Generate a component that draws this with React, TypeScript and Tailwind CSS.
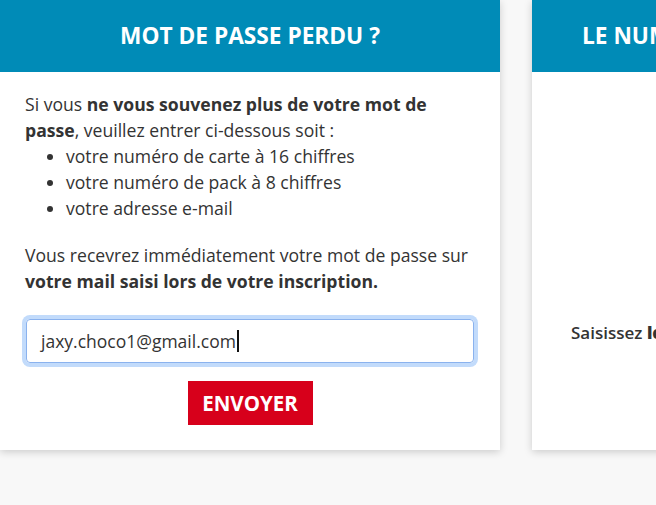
import React from 'react';

const FONT = { fontFamily: '"Open Sans", "Liberation Sans", sans-serif' };

function CardHeader({ title }: { title: string }) {
  return (
    <div className="h-[72px] bg-[#008bb7] flex items-center justify-center shrink-0">
      <h2 className="text-white font-bold text-[22.7px] whitespace-nowrap">{title}</h2>
    </div>
  );
}

export default function App() {
  return (
    <div
      className="w-[656px] h-[505px] overflow-hidden bg-[#f8f8f8] text-[#333]"
      style={FONT}
    >
      <div className="flex gap-[32px] w-max">
        <div className="w-[500px] h-[450px] bg-white shadow-[0_2px_8px_rgba(0,0,0,0.18)] flex flex-col">
          <CardHeader title="MOT DE PASSE PERDU ?" />
          <div className="px-[25px] pt-[19px] text-[17.6px] leading-[26px]">
            <p>
              Si vous <b>ne vous souvenez plus de votre mot de passe</b>, veuillez entrer ci-dessous soit :
            </p>
            <ul className="list-disc pl-[41px]">
              <li>votre numéro de carte à 16 chiffres</li>
              <li>votre numéro de pack à 8 chiffres</li>
              <li>votre adresse e-mail</li>
            </ul>
            <p className="mt-[21px]">
              Vous recevrez immédiatement votre mot de passe sur{' '}
              <b>votre mail saisi lors de votre inscription.</b>
            </p>
            <div className="mt-[25px] px-px">
              <div className="h-[44px] border border-[#8ab2ee] rounded-[4px] shadow-[0_0_0_4px_#c2dbfb] flex items-center pl-[14px] text-[17.5px] text-[#333]">
                jaxy.choco1@gmail.com
                <span className="inline-block w-[2px] h-[22px] bg-[#111] ml-px" />
              </div>
            </div>
            <div className="flex justify-center mt-[18px]">
              <button className="w-[125px] h-[44px] bg-[#d7001b] text-white font-bold text-[20.5px]">
                ENVOYER
              </button>
            </div>
          </div>
        </div>
        <div className="w-[500px] h-[450px] bg-white shadow-[0_2px_8px_rgba(0,0,0,0.18)] flex flex-col">
          <div className="h-[72px] bg-[#008bb7] flex items-center pl-[50px] shrink-0">
            <h2 className="text-white font-bold text-[22.7px] whitespace-nowrap">LE NUMÉRO DE VOTRE CARTE</h2>
          </div>
          <div className="pt-[248px] pl-[39px] text-[17px] font-semibold text-[#333] whitespace-nowrap">
            Saisissez <b className="font-extrabold">le numéro de votre carte</b>
          </div>
        </div>
      </div>
    </div>
  );
}
